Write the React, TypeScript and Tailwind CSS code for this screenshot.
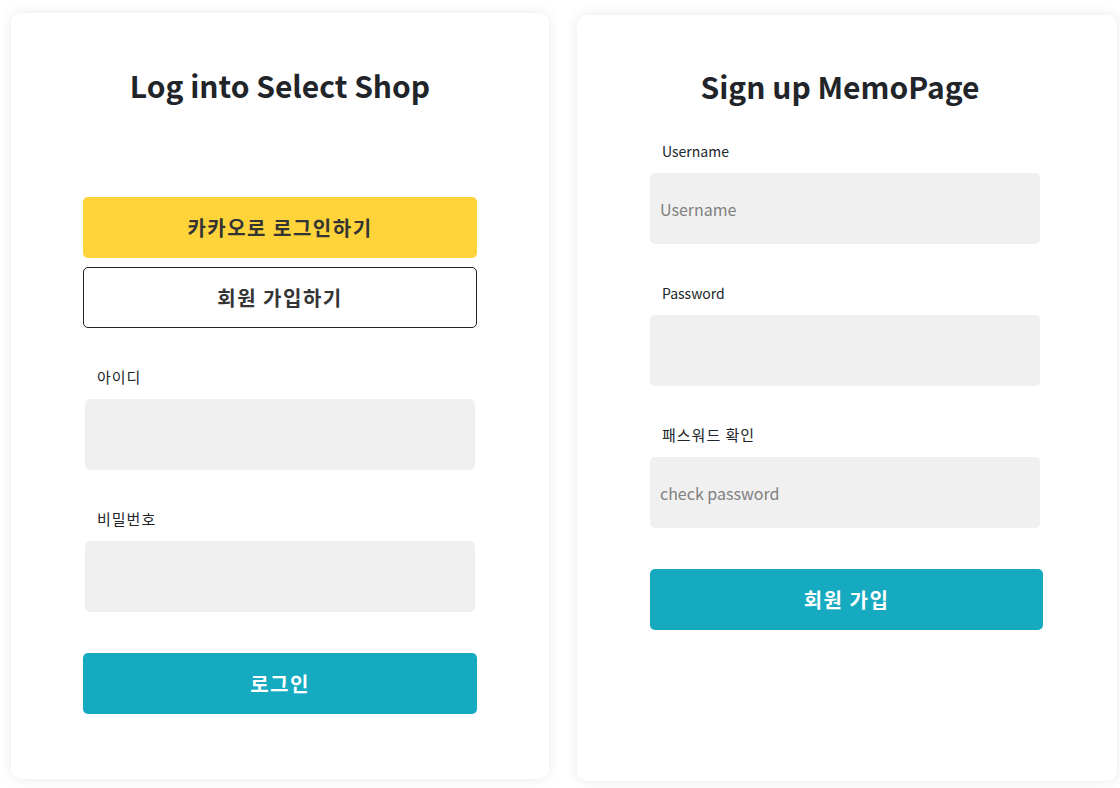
import React from "react";

const font = { fontFamily: '"Noto Sans CJK KR", "Noto Sans", sans-serif' };

function Field({ label, placeholder, type = "text", hangul = false }: { label: string; placeholder?: string; type?: string; hangul?: boolean }) {
  return (
    <div className="flex flex-col">
      <label
        className={
          hangul
            ? "pl-[12px] text-[15px] tracking-[1px] leading-[22px] text-[#212529]"
            : "pl-[12px] text-[14px] leading-[22px] text-[#212529]"
        }
      >
        {label}
      </label>
      <input
        type={type}
        placeholder={placeholder}
        className="mt-[11px] h-[71px] w-full rounded-[5px] bg-[#f0f0f0] px-[10px] text-[16px] text-[#212529] placeholder:text-[#808080] outline-none"
      />
    </div>
  );
}

export default function App() {
  return (
    <div className="min-h-[788px] w-[1120px] bg-white text-[#212529]" style={font}>
      <div className="flex items-start gap-[28px] pl-[11px] pt-[13px]">
        {/* Login card */}
        <div className="flex h-[766px] w-[538px] flex-col rounded-[10px] bg-white px-[72px] shadow-[0_0_14px_rgba(0,0,0,0.09)]">
          <h1 className="mt-[52px] text-center text-[30px] font-bold leading-[40px] text-[#212529]">Log into Select Shop</h1>
          <button className="mt-[92px] h-[61px] w-full rounded-[5px] bg-[#ffd43b] text-[20px] font-bold tracking-[1.5px] text-[#343434]">
            카카오로 로그인하기
          </button>
          <button className="mt-[9px] h-[61px] w-full rounded-[5px] border border-[#212529] bg-white text-[20px] font-bold tracking-[1.5px] text-[#343434]">
            회원 가입하기
          </button>
          <div className="mt-[38px] flex flex-col gap-[38px] px-[2px]">
            <Field label="아이디" hangul />
            <Field label="비밀번호" type="password" hangul />
          </div>
          <button className="mt-[41px] h-[61px] w-full rounded-[5px] bg-[#15aabf] text-[20px] font-bold tracking-[1.5px] text-white">
            로그인
          </button>
        </div>

        {/* Signup card */}
        <div className="mt-[2px] flex h-[766px] w-[540px] flex-col rounded-[10px] bg-white px-[73px] shadow-[0_0_14px_rgba(0,0,0,0.09)]">
          <h1 className="mt-[51px] pr-[14px] text-center text-[30px] font-bold leading-[40px] text-[#212529]">Sign up MemoPage</h1>
          <div className="mt-[34px] flex w-[390px] flex-col gap-[38px]">
            <Field label="Username" placeholder="Username" />
            <Field label="Password" type="password" />
            <Field label="패스워드 확인" placeholder="check password" type="password" hangul />
          </div>
          <button className="mt-[41px] h-[61px] w-[393px] rounded-[5px] bg-[#15aabf] text-[20px] font-bold tracking-[1.5px] text-white">
            회원 가입
          </button>
        </div>
      </div>
    </div>
  );
}
